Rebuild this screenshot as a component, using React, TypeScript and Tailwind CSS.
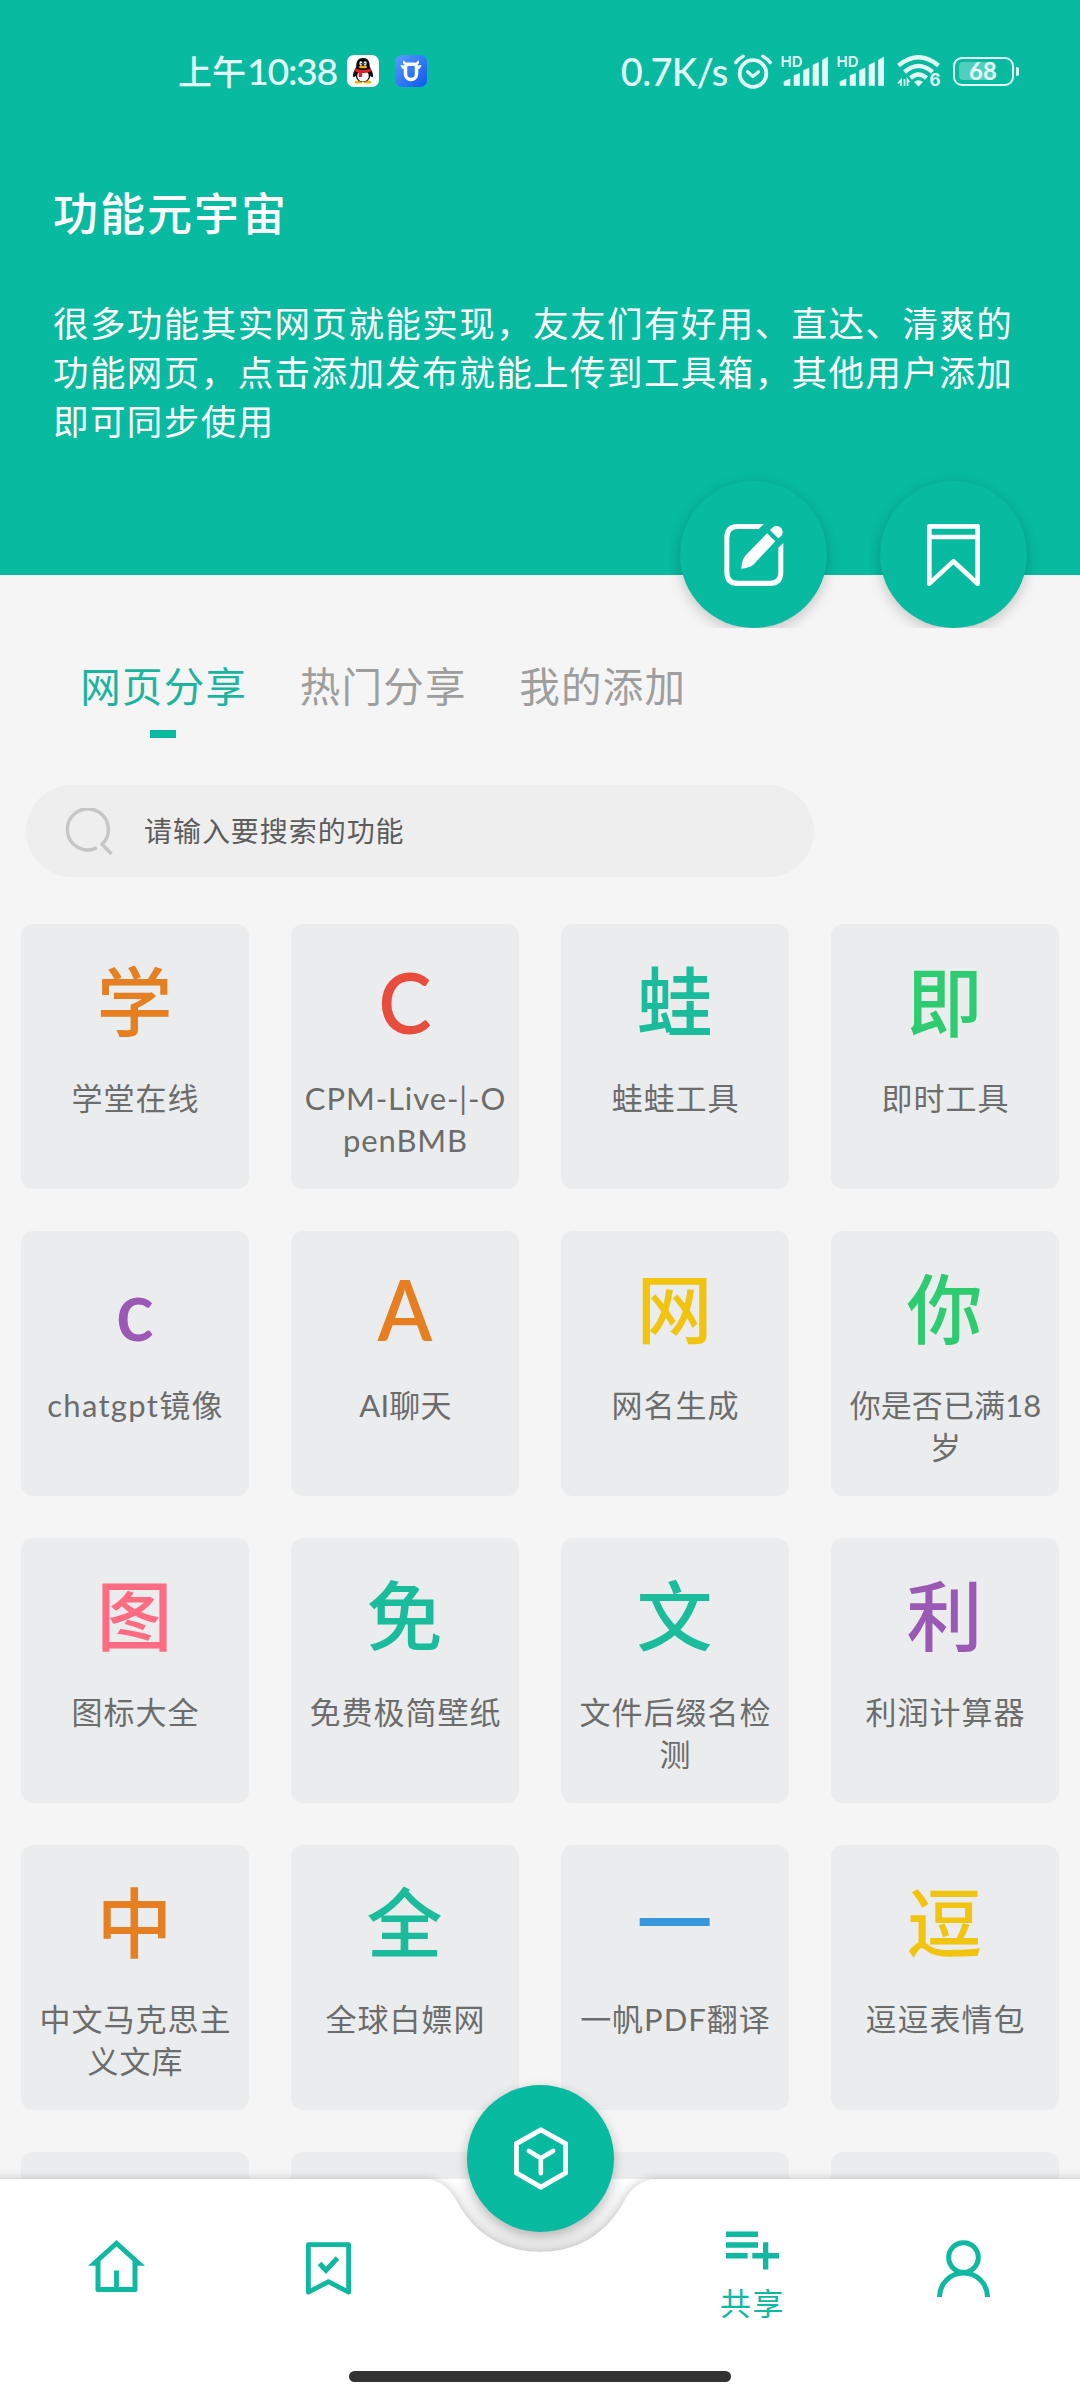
import type { ReactNode } from "react";

type Tool = { glyph: string; label: string; color: string; tracking?: string };

const tools: Tool[] = [
  { glyph: "学", label: "学堂在线", color: "text-[#e67e22]" },
  { glyph: "C", label: "CPM-Live-|-O\npenBMB", color: "text-[#e74c3c]", tracking: "tracking-[0.9px]" },
  { glyph: "蛙", label: "蛙蛙工具", color: "text-[#1abc9c]" },
  { glyph: "即", label: "即时工具", color: "text-[#2ecc71]" },
  { glyph: "c", label: "chatgpt镜像", color: "text-[#9b59b6]", tracking: "tracking-[1.3px]" },
  { glyph: "A", label: "AI聊天", color: "text-[#e67e22]", tracking: "tracking-[0.2px]" },
  { glyph: "网", label: "网名生成", color: "text-[#f1c40f]" },
  { glyph: "你", label: "你是否已满18\n岁", color: "text-[#2ecc71]", tracking: "tracking-[0.1px]" },
  { glyph: "图", label: "图标大全", color: "text-[#ff6b81]" },
  { glyph: "免", label: "免费极简壁纸", color: "text-[#1abc9c]" },
  { glyph: "文", label: "文件后缀名检\n测", color: "text-[#1abc9c]" },
  { glyph: "利", label: "利润计算器", color: "text-[#9b59b6]" },
  { glyph: "中", label: "中文马克思主\n义文库", color: "text-[#e67e22]" },
  { glyph: "全", label: "全球白嫖网", color: "text-[#1abc9c]" },
  { glyph: "一", label: "一帆PDF翻译", color: "text-[#3498db]" },
  { glyph: "逗", label: "逗逗表情包", color: "text-[#f1c40f]" },
];

function QQIcon() {
  return (
    <svg className="ml-[9px] h-8 w-8" viewBox="0 0 32 32">
      <rect width="32" height="32" rx="7" fill="#fff" />
      <ellipse cx="11.5" cy="27" rx="4" ry="1.6" fill="#f5b400" />
      <ellipse cx="20.5" cy="27" rx="4" ry="1.6" fill="#f5b400" />
      <path d="M16 3C11 3 9.3 6.500 9.300 11c0 2-3.300 5.500-3.300 9.500 0 2.500 1.500 2 2.600 0C9.500 25 12 27 16 27s6.500-2 7.400-6.500c1.100 2 2.600 2.500 2.600 0 0-4-3.300-7.500-3.300-9.500C22.700 6.500 21 3 16 3z" fill="#0a0a0a" />
      <ellipse cx="16" cy="21" rx="5.800" ry="5.500" fill="#fff" />
      <ellipse cx="13.900" cy="8.500" rx="1.500" ry="2.200" fill="#fff" />
      <ellipse cx="18.100" cy="8.500" rx="1.500" ry="2.200" fill="#fff" />
      <circle cx="14.300" cy="8.700" r=".8" fill="#111" />
      <circle cx="17.800" cy="8.700" r=".8" fill="#111" />
      <ellipse cx="16" cy="12" rx="4.200" ry="1.300" fill="#f5b400" />
      <path d="M8.500 13.500c5 2 10 2 15 0l.7 2.700c-3 1.500-6 1.900-9 1.800v4h-3.500v-4.500l-4-1.300z" fill="#e3202a" />
    </svg>
  );
}

function BullIcon() {
  return (
    <svg className="ml-4 h-8 w-8" viewBox="0 0 32 32">
      <defs>
        <linearGradient id="bull" x1="0" y1="0" x2="1" y2="1">
          <stop offset="0" stopColor="#5a9dff" />
          <stop offset="1" stopColor="#0d56f0" />
        </linearGradient>
      </defs>
      <rect width="32" height="32" rx="7" fill="url(#bull)" />
      <path d="M13 9.200h6q2.500 0 2.500 2.500v7.300a5.500 5.500 0 0 1-11 0v-7.300q0-2.500 2.500-2.500z" fill="none" stroke="#fff" strokeWidth="3.500" />
      <path d="M8.300 5.200L8 8.500l4.500 2-1-2.500zM23.700 5.200l.3 3.300-4.500 2 1-2.500zM5.500 10l4 .5v4q-3-.5-4-4.500zM26.500 10l-4 .5v4q3-.5 4-4.500z" fill="#fff" />
    </svg>
  );
}

function AlarmIcon() {
  return (
    <svg className="h-[35px] w-[38px]" viewBox="0 0 38 35" fill="none" stroke="#e2fbf6" strokeLinecap="round" strokeLinejoin="round">
      <circle cx="19" cy="19.500" r="13.300" strokeWidth="3.800" />
      <path d="M13.500 17.800l5.500 4.700 5.500-4.700" strokeWidth="3.200" />
      <path d="M1.800 8.500Q4.500 4.500 9.200 2.200M36.200 8.500Q33.500 4.500 28.800 2.200" strokeWidth="3.400" />
    </svg>
  );
}

function SignalIcon() {
  return (
    <div className="relative h-[31px] w-[46px]">
      <span className="absolute top-0 left-[-1px] font-['Inter'] text-[15px] leading-[12px] font-semibold text-[#e2fbf6]">HD</span>
      <svg className="h-[31px] w-[46px]" viewBox="0 0 46 31" fill="#e2fbf6">
        <path d="M2 29.500v-4l6-2.500v6.500zM12 29.500V19.500l5.500-2v12zM21.500 29.500V14.500l5.500-2.500v17.500zM31 29.500V9l5.500-2.500v23zM40.500 29.500V4l5.500-3v28.500z" stroke="#e2fbf6" strokeWidth=".6" strokeLinejoin="round" />
      </svg>
    </div>
  );
}

function WifiIcon() {
  return (
    <div className="relative h-8 w-[44px]">
      <svg className="h-8 w-[44px]" viewBox="0 0 44 32" fill="none" stroke="#e2fbf6" strokeWidth="4.400">
        <path d="M1.500 10.500Q21.500-6 41.500 10.500" />
        <path d="M7.500 17Q21.500 5 35.500 17" />
        <path d="M13.500 23Q21.500 16 29.500 23" />
        <path d="M17 27q4.500-3.500 9 0l-4.500 4.500z" fill="#e2fbf6" stroke="none" />
        <path d="M4 31v-6l-3 3.500M7.500 24v7M10.500 31v-6.500l2 2.500" strokeWidth="1.700" />
      </svg>
      <span className="absolute right-0 bottom-[-1px] font-['Inter'] text-[17px] leading-[16px] font-bold text-[#e2fbf6]">6</span>
    </div>
  );
}

function BatteryIcon() {
  return (
    <div className="flex items-center gap-[2px]">
      <div className="relative flex h-[29px] w-[61px] items-center justify-center rounded-[9px] border-[2.500px] border-[#e2fbf6]">
        <div className="absolute top-[3px] left-[4px] h-[18px] w-[34px] rounded-l-[4px] bg-white/30" />
        <span className="relative font-['Lato'] text-[24px] leading-none font-bold text-[#e2fbf6]">68</span>
      </div>
      <div className="h-[9px] w-[3.500px] rounded-r-[2px] bg-[#e2fbf6]" />
    </div>
  );
}

function RoundButton({ children }: { children: ReactNode }) {
  return (
    <div className="h-[172px] w-[172px] overflow-hidden">
      <div className="mx-auto mt-[25px] flex h-[147px] w-[147px] items-center justify-center rounded-full bg-[#07baa0] shadow-[0_4px_14px_rgba(0,0,0,0.2)]">
        {children}
      </div>
    </div>
  );
}

function StatusBar() {
  return (
    <div className="flex h-[142px] items-center pr-[61px] pl-[178px] text-[#e2fbf6]">
      <div className="flex items-center leading-none">
        <span className="text-[34px] font-medium">上午</span>
        <span className="ml-[1px] w-[91px] font-['Lato'] text-[37.500px] font-medium tracking-[-1.300px]">10:38</span>
        <QQIcon />
        <BullIcon />
      </div>
      <div className="ml-auto flex items-center">
        <span className="font-['Lato'] text-[38px] leading-none font-medium tracking-[-0.700px]">0.7K/s</span>
        <div className="ml-[6px] flex items-center gap-[10px]">
          <AlarmIcon />
          <SignalIcon />
          <SignalIcon />
          <div className="ml-[3px]"><WifiIcon /></div>
          <div className="ml-[2px]"><BatteryIcon /></div>
        </div>
      </div>
    </div>
  );
}

function Header() {
  return (
    <header className="h-[575px] bg-[#07baa0]">
      <StatusBar />
      <div className="px-[53px] text-white">
        <h1 className="mt-[36px] text-[45px] leading-[68px] font-medium tracking-[2px]">功能元宇宙</h1>
        <p className="mt-[51px] text-[35.500px] leading-[49px] tracking-[1.430px] whitespace-pre">
          {"很多功能其实网页就能实现，友友们有好用、直达、清爽的\n功能网页，点击添加发布就能上传到工具箱，其他用户添加\n即可同步使用"}
        </p>
      </div>
    </header>
  );
}

function Tabs() {
  return (
    <div className="mt-[70px] flex pl-[54px] text-[40.500px] leading-[80px] tracking-[1.200px] text-[#9e9e9e]">
      <div className="flex w-[219.500px] flex-col items-center text-[#1bb59d]">
        <span>网页分享</span>
        <div className="mt-[5px] -ml-[1px] h-2 w-[26px] bg-[#07baa0]" />
      </div>
      <span className="w-[219.500px] text-center">热门分享</span>
      <span className="w-[219.500px] text-center">我的添加</span>
    </div>
  );
}

function SearchBar() {
  return (
    <div className="mt-[47px] ml-[26px] flex h-[92px] w-[788px] items-center rounded-[46px] bg-[#eeeeee] pl-[39px]">
      <svg className="h-[47px] w-[48px]" viewBox="0 0 48 47" fill="none" stroke="#c6c6c6" strokeWidth="3.500">
        <path d="M32 39.800A20.500 20.500 0 1 1 37 36.300L46.500 46" strokeLinejoin="round" />
      </svg>
      <span className="-mt-[2px] ml-[31px] text-[28px] tracking-[0.950px] text-[#5c5c5c]">请输入要搜索的功能</span>
    </div>
  );
}

function ToolCard({ tool }: { tool: Tool }) {
  const glyphClass = /[A-Za-z]/.test(tool.glyph)
    ? "font-['Lato'] text-[84px] font-semibold scale-x-[0.95] translate-y-[4px]"
    : "text-[76px] font-medium -ml-[1px]";
  return (
    <div className="h-[265px] rounded-[12px] bg-[#ebeced] pt-[26px] text-center">
      <div className={`${glyphClass} h-[96px] leading-[96px] ${tool.color}`}>{tool.glyph}</div>
      <div
        className={`${tool.tracking ?? "tracking-[1px]"} mt-[31px] ml-[1px] font-['Lato','Noto_Sans_CJK_SC',sans-serif] text-[31px] leading-[42px] whitespace-pre text-[#6c6c6c]`}
      >
        {tool.label}
      </div>
    </div>
  );
}

function BottomNav() {
  return (
    <nav className="absolute inset-x-0 bottom-0 h-[320px]">
      <svg className="absolute inset-0 h-[320px] w-[1080px]" viewBox="0 0 1080 320">
        <defs>
          <linearGradient id="notch" x1="0" y1="99" x2="0" y2="172" gradientUnits="userSpaceOnUse">
            <stop offset="0" stopColor="#ffffff" />
            <stop offset=".35" stopColor="#f4f4f4" />
            <stop offset="1" stopColor="#e9e9e9" />
          </linearGradient>
          <filter id="barShadow" x="-5%" y="-20%" width="110%" height="140%">
            <feDropShadow dx="0" dy="0" stdDeviation="5" floodColor="#000" floodOpacity=".22" />
          </filter>
        </defs>
        <rect x="420" y="99" width="240" height="80" fill="url(#notch)" />
        <path
          d="M-30 99H423C440 99 451 110 457 122C475 155 505 172 540.500 172S606 155 624 122C630 110 641 99 658 99H1110V360H-30z"
          fill="#fff"
          filter="url(#barShadow)"
        />
      </svg>
      <div className="absolute top-[5px] left-[467px] flex h-[147px] w-[147px] items-center justify-center rounded-full bg-[#07baa0] shadow-[0_4px_12px_rgba(0,0,0,0.25)]">
        <svg className="h-[63px] w-[54px]" viewBox="219 201 163 189" fill="none" stroke="#fff" strokeLinejoin="round" strokeLinecap="round">
          <path d="M300 209l75 42v88l-75 43-74-43v-88z" strokeWidth="15" />
          <path d="M264 273l36 22 37-22M300 295v45" strokeWidth="14" />
        </svg>
      </div>
      <div className="relative mt-[99px] flex h-[180px] px-[10px] text-[#0fb8a0]">
        <div className="w-[212px]">
          <svg className="mt-[61px] ml-[78px] h-[52px] w-[57px]" viewBox="0 0 57 52" fill="currentColor">
            <path fillRule="evenodd" d="M28.500 0L57 25.700H49.500V50q0 2-2 2h-38q-2 0-2-2V25.700H0zM28.500 6.500L12.500 21V47H26.100V30.600H30.900V47H44.500V21z" />
          </svg>
        </div>
        <div className="w-[212px]">
          <svg className="mt-[63px] ml-[84px] h-[53px] w-[45px]" viewBox="0 0 45 53" fill="none" stroke="currentColor" strokeWidth="4.800">
            <path d="M2.400 50.200V2.700H42.600V50.200L22.500 39.700z" strokeLinejoin="round" />
            <path d="M13.500 21.500l6.500 6.800L31.500 16" strokeWidth="5" />
          </svg>
        </div>
        <div className="w-[212px]" />
        <div className="flex w-[212px] flex-col items-center">
          <svg className="mt-[52px] h-[39px] w-[53px]" viewBox="0 0 53 39" fill="currentColor">
            <path d="M0 .6h32v5.400H0zM0 11.300h32v5.400H0zM0 22h21.600v5.400H0zM26.300 22H37V11.300h5.300V22H53v5.400H42.300V38.500H37V27.400H26.300z" />
          </svg>
          <span className="mt-[12px] ml-[1px] text-[31px] leading-[40px] tracking-[1.500px]">共享</span>
        </div>
        <div className="w-[212px]">
          <svg className="mt-[61px] ml-[79px] h-[57px] w-[53px]" viewBox="0 0 53 57" fill="none" stroke="currentColor" strokeWidth="5">
            <circle cx="26.500" cy="17.500" r="14.800" />
            <path d="M2.500 57A24 24 0 0 1 50.500 57" />
          </svg>
        </div>
      </div>
      <div className="relative mx-auto mt-[12px] h-[11px] w-[382px] rounded-full bg-[#333333]" />
    </nav>
  );
}

export default function App() {
  return (
    <div className="relative h-[2400px] w-[1080px] overflow-hidden bg-[#f5f5f5] font-['Noto_Sans_CJK_SC',sans-serif]">
      <Header />
      <div className="absolute top-[456px] left-[667.500px] flex gap-[28px]">
        <RoundButton>
          <svg className="h-[62px] w-[60px]" viewBox="252 189 178 186" fill="none" stroke="#fff">
            <path d="M371 189L355 204H292q-25 0-25 28v100q0 27 25 27h96q26 0 26-27V260l15-14v87q0 42-41 42h-96q-40 0-40-42V231q0-42 40-42z" fill="#fff" stroke="none" />
            <path d="M380 217l25 24-66 70q-12 9-36 12 1-24 11-38zM389 208q10-15 22-13 17 4 16 20-1 9-13 17z" fill="#fff" stroke="none" />
          </svg>
        </RoundButton>
        <RoundButton>
          <svg className="h-[62px] w-[53px]" viewBox="861 189 159 186" fill="none" stroke="#fff" strokeWidth="14" strokeLinejoin="round">
            <path d="M868 196h145v172l-73-67-72 67zM868 228h145" />
          </svg>
        </RoundButton>
      </div>
      <Tabs />
      <SearchBar />
      <main className="mt-[47px] grid grid-cols-4 gap-[42px] px-[21px]">
        {tools.map((tool) => (
          <ToolCard key={tool.label} tool={tool} />
        ))}
        <div className="h-[265px] rounded-[12px] bg-[#ebeced]" />
        <div className="h-[265px] rounded-[12px] bg-[#ebeced]" />
        <div className="h-[265px] rounded-[12px] bg-[#ebeced]" />
        <div className="h-[265px] rounded-[12px] bg-[#ebeced]" />
      </main>
      <BottomNav />
    </div>
  );
}
